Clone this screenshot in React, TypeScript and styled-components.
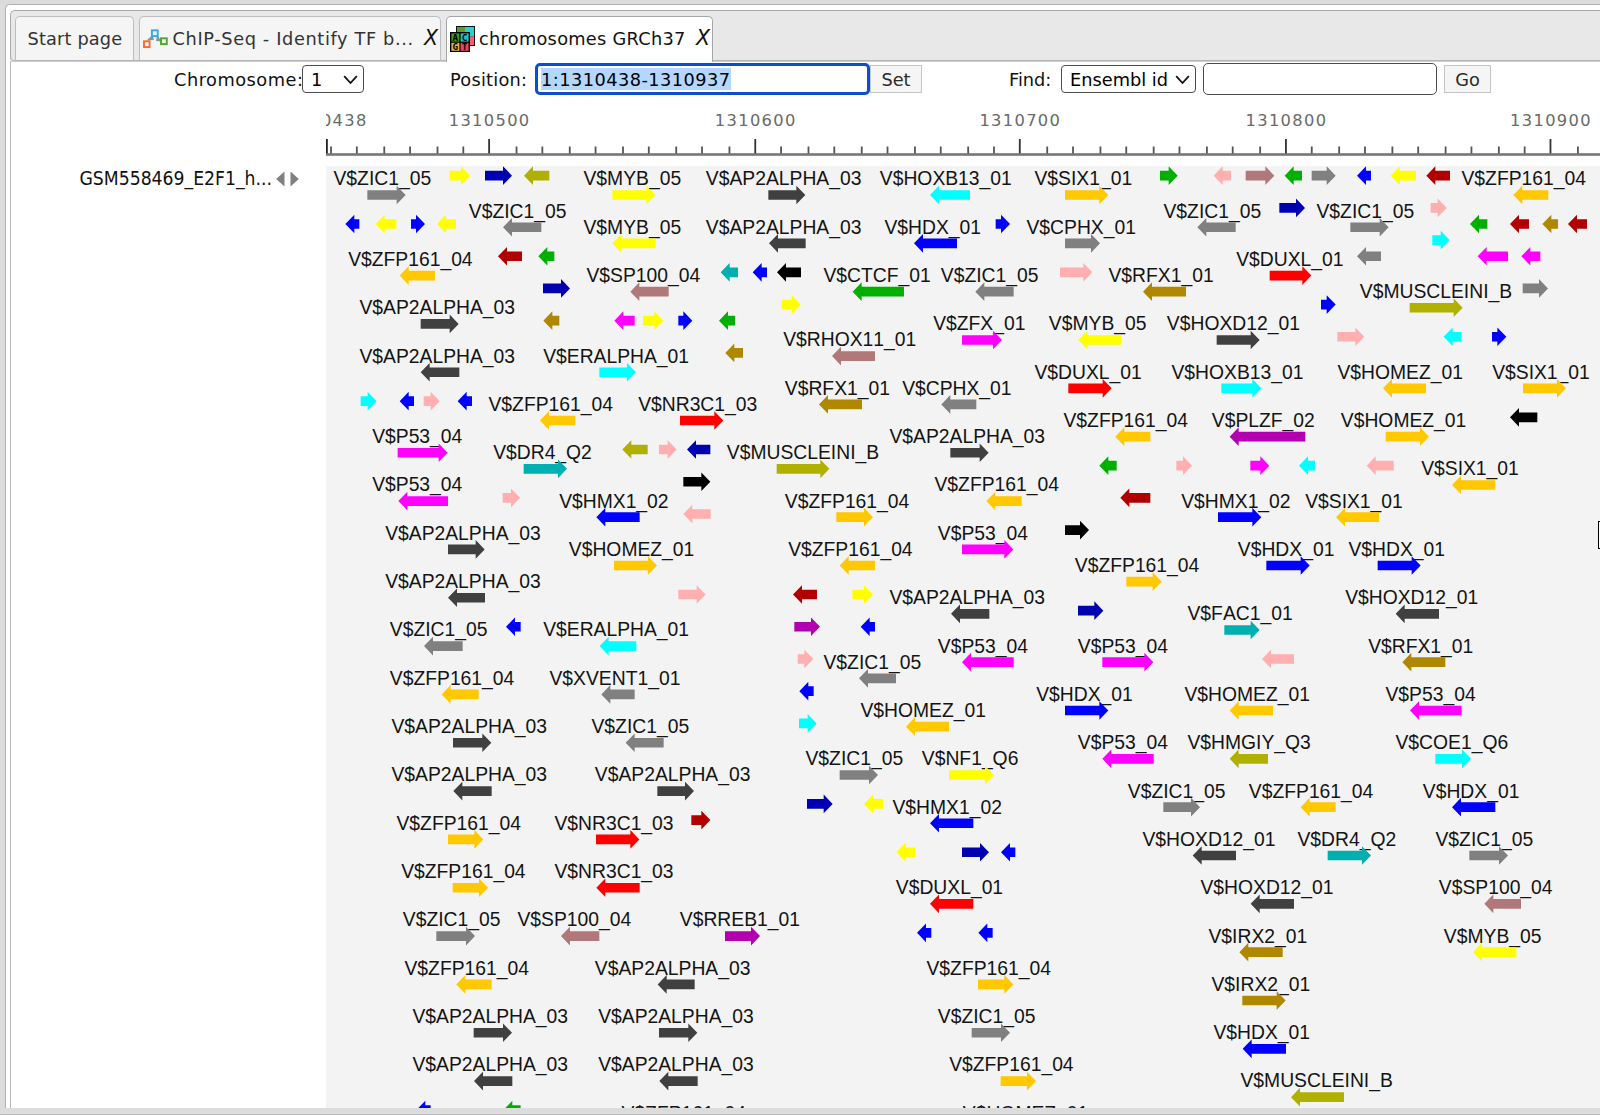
import React from "react";
import styled, { createGlobalStyle } from "styled-components";

const GlobalStyle = createGlobalStyle`
  html, body { margin: 0; padding: 0; }
  body { background: #dcdcdc; overflow: hidden; }
  * { box-sizing: border-box; }
`;

const UI_FONT = `Verdana, "DejaVu Sans", sans-serif`;

const Page = styled.div`
  width: 1600px;
  height: 1115px;
  display: flex;
  flex-direction: column;
  padding: 4px 0 0 5px;
  background: #dcdcdc;
  overflow: hidden;
  font-family: ${UI_FONT};
  font-size: 17.75px;
  color: #111;
  position: relative;
`;

const Frame = styled.div`
  height: 1104px;
  flex: none;
  border: solid #b0b0b0;
  border-width: 1px 0 0 1px;
  border-radius: 5px 0 0 0;
  background: #fff;
  padding: 5px 0 0 4px;
`;

const StatusStrip = styled.div`
  height: 7px;
  margin-left: -5px;
  background: #dcdcdc;
  border-bottom: 1px solid #bdbdbd;
`;

const TabBar = styled.div`
  height: 51px;
  display: flex;
  align-items: flex-end;
  gap: 5px;
  padding-left: 4px;
  background: #e8e8e8;
  border: solid #aaa;
  border-width: 1px 0 0 1px;
  border-radius: 5px 0 0 4px;
  box-shadow: inset 0 -1px 0 #b4b4b4;
`;

const Tab = styled.div<{ $width: number; $active?: boolean }>`
  width: ${(p) => p.$width}px;
  height: ${(p) => (p.$active ? 46 : 45)}px;
  margin-bottom: ${(p) => (p.$active ? -1 : 0)}px;
  padding-bottom: ${(p) => (p.$active ? 2 : 0)}px;
  flex: none;
  display: flex;
  align-items: center;
  border: 1px solid ${(p) => (p.$active ? "#a6a6a6" : "#bdbdbd")};
  border-bottom: ${(p) => (p.$active ? "none" : "1px solid #b4b4b4")};
  border-radius: 5px 5px 0 0;
  background: ${(p) => (p.$active ? "#fff" : "#f5f5f5")};
  color: ${(p) => (p.$active ? "#111" : "#333")};
  white-space: nowrap;
`;

const TabText = styled.span<{ $gap: number; $spacing?: number }>`
  margin-left: ${(p) => p.$gap}px;
  letter-spacing: ${(p) => p.$spacing ?? 0}px;
  line-height: 24px;
`;

const CloseMark = styled.span`
  margin-left: auto;
  width: 16px;
  color: #111;
  font-family: "DejaVu Sans", sans-serif;
  font-size: 20.5px;
  font-style: italic;
  line-height: 24px;
  padding-bottom: 1px;
`;

const Content = styled.div`
  border-left: 1px solid #b8b8b8;
  border-top: 1px solid #cfcfcf;
  height: 1047px;
  background: #fff;
  display: flex;
  flex-direction: column;
`;

const Toolbar = styled.div`
  height: 35px;
  display: flex;
  align-items: center;
  padding: 0 0 1px 163px;
  flex: none;
`;

const Label = styled.label<{ $width: number; $spacing?: number }>`
  width: ${(p) => p.$width}px;
  letter-spacing: ${(p) => p.$spacing ?? 0}px;
  flex: none;
  white-space: nowrap;
  line-height: 24px;
  padding-top: 1px;
`;

const Select = styled.div<{ $width: number }>`
  width: ${(p) => p.$width}px;
  height: 28px;
  flex: none;
  display: flex;
  align-items: center;
  justify-content: space-between;
  padding: 1px 5px 0 8px;
  border: 1px solid #4c4c4c;
  border-radius: 4px;
  background: #fff;
  color: #000;
  white-space: nowrap;
`;

const Field = styled.div<{ $width: number; $focused?: boolean }>`
  width: ${(p) => p.$width}px;
  height: 32px;
  flex: none;
  display: flex;
  align-items: center;
  padding-left: 3px;
  border: ${(p) => (p.$focused ? "3px solid #0a4fcb" : "1px solid #4c4c4c")};
  border-radius: 5px;
  background: #fff;
  color: #000;
`;

const Selected = styled.span`
  background: #b3d7ff;
  line-height: 24px;
  height: 22px;
  letter-spacing: 0.46px;
`;

const Button = styled.div<{ $width: number }>`
  width: ${(p) => p.$width}px;
  height: 28px;
  flex: none;
  display: flex;
  align-items: center;
  justify-content: center;
  padding-top: 1px;
  border: 1px solid #c4c4c4;
  background: #f5f5f5;
  color: #2a2a2a;
`;

const Spacer = styled.div<{ $width: number }>`
  width: ${(p) => p.$width}px;
  flex: none;
`;

const Browser = styled.div`
  flex: 1;
  display: grid;
  grid-template-columns: 315px 1fr;
  grid-template-rows: 69px 1fr;
  min-height: 0;
`;

const TrackHeader = styled.div`
  grid-column: 1;
  grid-row: 2;
  display: flex;
  align-items: center;
  justify-content: flex-end;
  height: 25px;
  padding-right: 27px;
  font-family: "DejaVu Sans Condensed", "DejaVu Sans", sans-serif;
  font-stretch: condensed;
  font-size: 19.2px;
  line-height: 24px;
  white-space: nowrap;
`;

const TrackName = styled.span`
  margin-right: 4px;
  padding-top: 1px;
`;

const RulerCell = styled.div`
  grid-column: 2;
  grid-row: 1;
  overflow: hidden;
`;

const TrackCell = styled.div`
  grid-column: 2;
  grid-row: 2;
  background: #f3f3f3;
  overflow: hidden;
`;

const Drawing = styled.svg`
  display: block;
`;

const RulerText = styled.text`
  font-family: "DejaVu Sans", sans-serif;
  font-size: 16.3px;
  fill: #6a6a6a;
`;

const SiteText = styled.text`
  font-family: "Liberation Sans", Arial, sans-serif;
  font-size: 57.9px;
  font-kerning: none;
  fill: #141414;
`;

const Handle = styled.div`
  position: absolute;
  left: 1598px;
  top: 521px;
  width: 12px;
  height: 28px;
  border: 1px solid #000;
  background: #fff;
`;

/* ---------- icons ---------- */

const Chevron = () => (
  <svg width="15" height="10" viewBox="0 0 15 10" fill="none" stroke="#111" strokeWidth="1.8">
    <path d="M1.2 1.2 L7.5 8 L13.8 1.2" />
  </svg>
);

const WorkflowIcon = () => (
  <svg width="25" height="20" viewBox="0 0 25 20">
    <path d="M3.5 11.5 L9.5 6 L11 11 Z M14 5.5 L18.5 12.5 L13 12 Z" fill="#8d9396" />
    <rect x="8.9" y="1.3" width="5.8" height="5.8" fill="#e4f5ff" stroke="#35a8ef" strokeWidth="1.9" />
    <rect x="1" y="12.3" width="5.6" height="5.8" fill="#fff0e8" stroke="#f56b2a" strokeWidth="1.9" />
    <rect x="18" y="9.3" width="5.8" height="5.8" fill="#eaf8df" stroke="#4da52e" strokeWidth="1.9" />
  </svg>
);

const GenomeIcon = () => (
  <svg width="26" height="26" viewBox="0 0 26 26" fontFamily="DejaVu Sans Mono, monospace" fontWeight="bold" fontSize="9.4">
    <rect x="6" y="0" width="19" height="20" fill="#111" />
    <rect x="7" y="1" width="8" height="9" fill="#5aa02c" />
    <rect x="15" y="1" width="9" height="9.5" fill="#2bcfd4" />
    <rect x="15" y="10.5" width="9" height="8.5" fill="#ff5a6e" />
    <rect x="0" y="6" width="20" height="20" fill="#000" />
    <rect x="1.4" y="7.4" width="8" height="8.2" fill="#3a9a1e" />
    <rect x="10.6" y="7.4" width="8" height="8.2" fill="#21c4c9" />
    <rect x="1.4" y="16.8" width="8" height="8" fill="#e8b54a" />
    <rect x="10.6" y="16.8" width="8" height="8" fill="#f5405c" />
    <text x="2.6" y="14.9">A</text>
    <text x="11.8" y="14.9">C</text>
    <text x="2.6" y="24.3">G</text>
    <text x="11.8" y="24.3">T</text>
  </svg>
);

const MoveArrows = () => (
  <svg width="23" height="16" viewBox="0 0 23 16" fill="#808080">
    <path d="M8.5 0.5 V15.5 L0.2 8 Z" />
    <path d="M14.5 0.5 V15.5 L22.8 8 Z" />
  </svg>
);

/* ---------- ruler ---------- */

const RULER_START = 1310438;
const tickX = (pos: number) => Math.floor((pos - RULER_START) * 1.645) * 1.613 + 0.3;

const Ruler = () => {
  const ticks: number[] = [];
  for (let p = 1310440; p <= 1310920; p += 10) ticks.push(p);
  const labels = [1310438, 1310500, 1310600, 1310700, 1310800, 1310900];
  return (
    <Drawing width="1274" height="69" viewBox="0 97 1274 69">
      {labels.map((p) => (
        <RulerText key={p} x={tickX(p) - 40.5} y={125.6} textLength={80.5} lengthAdjust="spacing">
          {p}
        </RulerText>
      ))}
      <rect x="0" y="139" width="1.8" height="15" fill="#222" />
      {ticks.map((p) => {
        const major = p % 100 === 0;
        return (
          <rect
            key={p}
            x={tickX(p) - 1}
            y={major ? 139 : 146.5}
            width="1.8"
            height={major ? 15 : 8}
            fill={major ? "#333" : "#555"}
          />
        );
      })}
      <rect x="0" y="153.2" width="1274" height="2.6" fill="#777" />
    </Drawing>
  );
};

/* ---------- binding sites ---------- */

const C = {
  grey: "#808080",
  yellow: "#ffff00",
  navy: "#0000b0",
  olive: "#b0b000",
  blue: "#0000ff",
  orange: "#ffc800",
  dark: "#404040",
  cyan: "#00ffff",
  pink: "#ffafaf",
  magenta: "#ff00ff",
  teal: "#00b0b0",
  gold: "#b08800",
  green: "#00b000",
  maroon: "#b00000",
  rosy: "#b07878",
  red: "#ff0000",
  purple: "#b000b0",
  black: "#000000",
};
type Colour = keyof typeof C;

const matrixColour: Record<string, Colour> = {
  ZIC1_05: "grey",
  MYB_05: "yellow",
  AP2ALPHA_03: "dark",
  HOXB13_01: "cyan",
  SIX1_01: "orange",
  ZFP161_04: "orange",
  HDX_01: "blue",
  CPHX_01: "grey",
  SP100_04: "rosy",
  CTCF_01: "green",
  RFX1_01: "gold",
  DUXL_01: "red",
  MUSCLEINI_B: "olive",
  ERALPHA_01: "cyan",
  RHOX11_01: "rosy",
  ZFX_01: "magenta",
  HOXD12_01: "dark",
  HOMEZ_01: "orange",
  NR3C1_03: "red",
  PLZF_02: "purple",
  P53_04: "magenta",
  DR4_Q2: "teal",
  HMX1_02: "blue",
  FAC1_01: "teal",
  XVENT1_01: "grey",
  NF1_Q6: "yellow",
  HMGIY_Q3: "olive",
  COE1_Q6: "cyan",
  RREB1_01: "purple",
  IRX2_01: "gold",
};

type Dir = "L" | "R";
/* level, matrix, label x, arrow start, arrow end, strand */
type Site = [number, string, number, number, number, Dir];
/* level, colour, arrow start, arrow end, strand */
type Mini = [number, Colour, number, number, Dir];

interface Segment {
  offset: number;
  sites: Site[];
  minis: Mini[];
}

const segments: Segment[] = [
  {
    offset: 0,
    sites: [
      [0, "ZIC1_05", 42, 142, 257, "R"],
      [0, "MYB_05", 792, 877, 1006, "R"],
      [2, "ZIC1_05", 448, 549, 664, "L"],
      [3, "MYB_05", 792, 877, 1007, "L"],
      [5, "ZFP161_04", 86, 239, 345, "L"],
      [6, "SP100_04", 801, 931, 1046, "L"],
      [8, "AP2ALPHA_03", 120, 302, 416, "R"],
      [11, "AP2ALPHA_03", 120, 302, 418, "L"],
      [11, "ERALPHA_01", 671, 838, 948, "R"],
      [14, "ZFP161_04", 507, 660, 766, "L"],
      [14, "NR3C1_03", 956, 1080, 1210, "R"],
      [16, "P53_04", 158, 233, 383, "R"],
      [17, "DR4_Q2", 521, 611, 741, "R"],
      [19, "P53_04", 158, 235, 384, "L"],
      [20, "HMX1_02", 719, 829, 959, "L"],
      [22, "AP2ALPHA_03", 197, 384, 494, "R"],
      [23, "HOMEZ_01", 748, 882, 1011, "R"],
      [25, "AP2ALPHA_03", 197, 384, 495, "L"],
      [28, "ZIC1_05", 211, 312, 428, "L"],
      [28, "ERALPHA_01", 671, 839, 949, "L"],
      [31, "ZFP161_04", 211, 365, 476, "L"],
      [31, "XVENT1_01", 690, 844, 944, "L"],
      [34, "AP2ALPHA_03", 216, 399, 514, "R"],
      [34, "ZIC1_05", 816, 917, 1031, "L"],
      [37, "AP2ALPHA_03", 216, 400, 515, "L"],
      [37, "AP2ALPHA_03", 826, 1012, 1122, "R"],
      [40, "ZFP161_04", 231, 384, 490, "R"],
      [40, "NR3C1_03", 705, 828, 958, "R"],
      [43, "ZFP161_04", 245, 398, 504, "R"],
      [43, "NR3C1_03", 705, 829, 959, "L"],
      [46, "ZIC1_05", 250, 349, 465, "R"],
      [46, "SP100_04", 594, 723, 838, "L"],
      [46, "RREB1_01", 1081, 1215, 1320, "R"],
      [49, "ZFP161_04", 255, 409, 515, "L"],
      [49, "AP2ALPHA_03", 826, 1013, 1124, "L"],
      [52, "AP2ALPHA_03", 279, 461, 576, "R"],
      [52, "AP2ALPHA_03", 836, 1017, 1132, "R"],
      [55, "AP2ALPHA_03", 279, 462, 577, "L"],
      [55, "AP2ALPHA_03", 836, 1018, 1133, "L"],
      [58, "ZFP161_04", 906, 1060, 1166, "L"],
    ],
    minis: [
      [0, "yellow", 389, 450, "R"],
      [0, "navy", 495, 576, "R"],
      [0, "olive", 612, 688, "L"],
      [3, "blue", 76, 118, "L"],
      [3, "yellow", 167, 229, "L"],
      [3, "blue", 273, 315, "R"],
      [3, "yellow", 351, 408, "L"],
      [5, "maroon", 534, 606, "L"],
      [5, "green", 655, 703, "L"],
      [7, "navy", 669, 750, "R"],
      [6, "teal", 1202, 1254, "L"],
      [9, "gold", 670, 718, "L"],
      [9, "magenta", 883, 944, "L"],
      [9, "yellow", 969, 1030, "R"],
      [9, "blue", 1075, 1117, "R"],
      [9, "green", 1197, 1245, "L"],
      [11, "gold", 1216, 1269, "L"],
      [14, "cyan", 122, 170, "R"],
      [14, "blue", 239, 282, "L"],
      [14, "pink", 311, 359, "R"],
      [14, "blue", 413, 456, "L"],
      [17, "olive", 907, 983, "L"],
      [17, "pink", 1017, 1070, "R"],
      [17, "navy", 1101, 1171, "L"],
      [19, "black", 1090, 1171, "R"],
      [20, "pink", 548, 600, "R"],
      [21, "pink", 1090, 1172, "L"],
      [26, "pink", 1075, 1157, "R"],
      [28, "blue", 558, 602, "L"],
      [40, "maroon", 1114, 1171, "R"],
      [58, "blue", 289, 332, "L"],
      [58, "green", 550, 602, "L"],
    ],
  },
  {
    offset: 1290,
    sites: [
      [0, "AP2ALPHA_03", -131, 55, 166, "R"],
      [0, "HOXB13_01", 391, 540, 660, "L"],
      [0, "SIX1_01", 855, 945, 1075, "R"],
      [3, "AP2ALPHA_03", -131, 57, 167, "L"],
      [3, "HDX_01", 405, 492, 621, "L"],
      [3, "CPHX_01", 831, 945, 1050, "R"],
      [6, "CTCF_01", 222, 308, 462, "L"],
      [6, "ZIC1_05", 574, 676, 791, "L"],
      [6, "RFX1_01", 1077, 1179, 1308, "L"],
      [9, "ZFX_01", 551, 636, 756, "R"],
      [9, "MYB_05", 898, 985, 1114, "L"],
      [10, "RHOX11_01", 101, 246, 375, "L"],
      [12, "DUXL_01", 855, 955, 1085, "R"],
      [13, "RFX1_01", 106, 207, 336, "L"],
      [13, "CPHX_01", 458, 574, 679, "L"],
      [15, "ZFP161_04", 942, 1096, 1201, "L"],
      [16, "AP2ALPHA_03", 420, 601, 716, "R"],
      [17, "MUSCLEINI_B", -68, 80, 238, "R"],
      [19, "ZFP161_04", 555, 709, 815, "L"],
      [20, "ZFP161_04", 106, 259, 369, "R"],
      [22, "P53_04", 565, 636, 790, "R"],
      [23, "ZFP161_04", 116, 269, 375, "L"],
      [24, "ZFP161_04", 976, 1129, 1235, "R"],
      [26, "AP2ALPHA_03", 420, 603, 718, "L"],
      [29, "P53_04", 565, 636, 791, "L"],
      [29, "P53_04", 985, 1057, 1210, "R"],
      [30, "ZIC1_05", 222, 327, 438, "L"],
      [32, "HDX_01", 860, 945, 1075, "R"],
      [33, "HOMEZ_01", 333, 468, 597, "L"],
      [35, "P53_04", 985, 1057, 1211, "L"],
      [36, "ZIC1_05", 168, 269, 384, "R"],
      [36, "NF1_Q6", 517, 597, 732, "R"],
      [38, "ZIC1_05", 1135, 1240, 1350, "R"],
      [39, "HMX1_02", 429, 540, 670, "L"],
      [44, "DUXL_01", 439, 540, 670, "L"],
      [49, "ZFP161_04", 531, 684, 790, "R"],
      [52, "ZIC1_05", 565, 665, 780, "R"],
      [55, "ZFP161_04", 599, 752, 858, "R"],
      [58, "HOMEZ_01", 640, 790, 920, "R"],
    ],
    minis: [
      [0, "green", 1230, 1283, "R"],
      [3, "blue", 737, 780, "R"],
      [6, "blue", 8, 51, "L"],
      [6, "black", 81, 153, "L"],
      [6, "pink", 930, 1027, "R"],
      [8, "yellow", 95, 152, "R"],
      [18, "green", 1048, 1100, "L"],
      [18, "pink", 1279, 1326, "R"],
      [20, "maroon", 1111, 1201, "L"],
      [22, "black", 945, 1017, "R"],
      [26, "maroon", 129, 201, "L"],
      [26, "yellow", 307, 369, "R"],
      [27, "navy", 984, 1060, "R"],
      [28, "purple", 133, 210, "R"],
      [28, "blue", 332, 375, "L"],
      [30, "pink", 143, 190, "R"],
      [32, "blue", 148, 191, "L"],
      [34, "cyan", 147, 200, "R"],
      [39, "navy", 171, 248, "R"],
      [39, "yellow", 342, 399, "L"],
      [42, "yellow", 439, 495, "L"],
      [42, "navy", 636, 717, "R"],
      [42, "blue", 753, 796, "L"],
      [47, "blue", 501, 544, "L"],
      [47, "blue", 685, 728, "L"],
    ],
  },
  {
    offset: 2550,
    sites: [
      [0, "ZFP161_04", 876, 1030, 1135, "L"],
      [2, "ZIC1_05", -18, 82, 197, "L"],
      [2, "ZIC1_05", 441, 541, 656, "R"],
      [5, "DUXL_01", 200, 299, 424, "R"],
      [7, "MUSCLEINI_B", 571, 719, 878, "R"],
      [9, "HOXD12_01", -8, 140, 269, "R"],
      [12, "HOXB13_01", 6, 154, 274, "R"],
      [12, "HOMEZ_01", 504, 639, 768, "L"],
      [12, "SIX1_01", 968, 1059, 1188, "R"],
      [15, "PLZF_02", 127, 179, 406, "L"],
      [15, "HOMEZ_01", 514, 647, 777, "R"],
      [18, "SIX1_01", 755, 846, 976, "L"],
      [20, "HMX1_02", 35, 144, 274, "R"],
      [20, "SIX1_01", 407, 498, 627, "L"],
      [23, "HDX_01", 205, 289, 419, "R"],
      [23, "HDX_01", 537, 623, 752, "R"],
      [26, "HOXD12_01", 527, 677, 807, "L"],
      [27, "FAC1_01", 54, 163, 269, "R"],
      [29, "RFX1_01", 596, 697, 826, "L"],
      [32, "HOMEZ_01", 45, 179, 309, "L"],
      [32, "P53_04", 648, 720, 875, "L"],
      [35, "HMGIY_Q3", 54, 179, 294, "L"],
      [35, "COE1_Q6", 678, 796, 903, "R"],
      [38, "ZFP161_04", 238, 392, 497, "L"],
      [38, "HDX_01", 760, 846, 976, "L"],
      [41, "HOXD12_01", -81, 68, 198, "L"],
      [41, "DR4_Q2", 384, 473, 603, "R"],
      [41, "ZIC1_05", 798, 898, 1014, "R"],
      [44, "HOXD12_01", 93, 242, 372, "L"],
      [44, "SP100_04", 808, 943, 1053, "L"],
      [47, "IRX2_01", 117, 208, 338, "L"],
      [47, "MYB_05", 823, 909, 1039, "L"],
      [50, "IRX2_01", 126, 217, 347, "R"],
      [53, "HDX_01", 132, 218, 348, "L"],
      [56, "MUSCLEINI_B", 213, 363, 522, "L"],
    ],
    minis: [
      [0, "pink", 131, 183, "L"],
      [0, "rosy", 227, 313, "R"],
      [0, "green", 344, 396, "L"],
      [0, "grey", 425, 497, "R"],
      [0, "blue", 561, 603, "L"],
      [0, "yellow", 662, 738, "L"],
      [0, "maroon", 769, 840, "L"],
      [2, "navy", 328, 405, "R"],
      [2, "pink", 782, 830, "R"],
      [3, "green", 900, 952, "L"],
      [3, "maroon", 1020, 1077, "L"],
      [3, "gold", 1117, 1164, "L"],
      [3, "maroon", 1194, 1251, "L"],
      [4, "cyan", 787, 839, "R"],
      [5, "grey", 561, 633, "L"],
      [5, "magenta", 923, 1014, "L"],
      [5, "magenta", 1054, 1111, "L"],
      [7, "grey", 1058, 1134, "R"],
      [8, "blue", 453, 497, "R"],
      [10, "pink", 502, 583, "R"],
      [10, "cyan", 821, 874, "L"],
      [10, "blue", 966, 1009, "R"],
      [15, "black", 1020, 1102, "L"],
      [18, "magenta", 241, 298, "R"],
      [18, "cyan", 387, 435, "L"],
      [18, "pink", 590, 671, "L"],
      [30, "pink", 276, 372, "L"],
    ],
  },
];

const LEVEL = 48.33;

const arrowPoints = (x1: number, x2: number, y: number, dir: Dir) => {
  const tip = dir === "R" ? x2 : x1;
  const tail = dir === "R" ? x1 : x2;
  const neck = dir === "R" ? x2 - 27 : x1 + 27;
  return [
    [tail, y - 14.5],
    [neck, y - 14.5],
    [neck, y - 28],
    [tip, y],
    [neck, y + 28],
    [neck, y + 14.5],
    [tail, y + 14.5],
  ]
    .map((p) => p.join(","))
    .join(" ");
};

const SiteTrack = () => (
  <Drawing width="1274" height="942" viewBox="18 33 3822 2826">
    {segments.map((seg) => (
      <g key={seg.offset} transform={`translate(${seg.offset} 0)`}>
        {seg.sites.map(([level, name, tx, x1, x2, dir], i) => (
          <g key={i}>
            <SiteText x={tx - 1.5} y={91 + level * LEVEL}>
              {"V$" + name}
            </SiteText>
            <polygon points={arrowPoints(x1, x2, 120 + level * LEVEL, dir)} fill={C[matrixColour[name]]} />
          </g>
        ))}
        {seg.minis.map(([level, colour, x1, x2, dir], i) => (
          <polygon key={i} points={arrowPoints(x1, x2, 62 + level * LEVEL, dir)} fill={C[colour]} />
        ))}
      </g>
    ))}
  </Drawing>
);

export default function App() {
  return (
    <Page>
      <GlobalStyle />
      <Frame>
        <TabBar>
          <Tab $width={119}>
            <TabText $gap={11.5} $spacing={0.15}>Start page</TabText>
          </Tab>
          <Tab $width={302}>
            <Spacer $width={3} />
            <WorkflowIcon />
            <TabText $gap={4.5} $spacing={0.63}>ChIP-Seq - Identify TF b...</TabText>
            <CloseMark>X</CloseMark>
          </Tab>
          <Tab $width={267} $active>
            <Spacer $width={3} />
            <GenomeIcon />
            <TabText $gap={3} $spacing={0.28}>chromosomes GRCh37</TabText>
            <CloseMark>X</CloseMark>
          </Tab>
        </TabBar>
        <Content>
          <Toolbar>
            <Label $width={128} $spacing={0.5}>Chromosome:</Label>
            <Select $width={62}>
              1 <Chevron />
            </Select>
            <Spacer $width={86} />
            <Label $width={85} $spacing={0.25}>Position:</Label>
            <Field $width={335} $focused>
              <Selected>1:1310438-1310937</Selected>
            </Field>
            <Button $width={52}>Set</Button>
            <Spacer $width={87} />
            <Label $width={52}>Find:</Label>
            <Select $width={135}>
              Ensembl id <Chevron />
            </Select>
            <Spacer $width={7} />
            <Field $width={234} />
            <Spacer $width={7} />
            <Button $width={47}>Go</Button>
          </Toolbar>
          <Browser>
            <RulerCell>
              <Ruler />
            </RulerCell>
            <TrackHeader>
              <TrackName>GSM558469_E2F1_h...</TrackName>
              <MoveArrows />
            </TrackHeader>
            <TrackCell>
              <SiteTrack />
            </TrackCell>
          </Browser>
        </Content>
      </Frame>
      <StatusStrip />
      <Handle />
    </Page>
  );
}
